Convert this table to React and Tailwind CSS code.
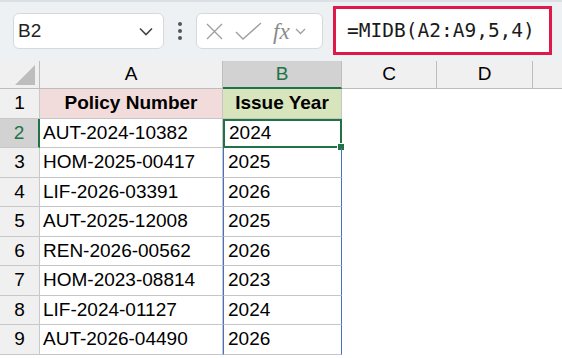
import React from "react";

const rows = [
  ["AUT-2024-10382", "2024"],
  ["HOM-2025-00417", "2025"],
  ["LIF-2026-03391", "2026"],
  ["AUT-2025-12008", "2025"],
  ["REN-2026-00562", "2026"],
  ["HOM-2023-08814", "2023"],
  ["LIF-2024-01127", "2024"],
  ["AUT-2026-04490", "2026"],
];

const Toolbar = () => (
  <div className="h-[61px] bg-[#eef1f4] border-t-[2px] border-[#dcdfe3] flex items-start">
    <div className="ml-[13px] mt-[11px] w-[151px] h-[36px] bg-white border border-[#d6d8dc] rounded-[6px] flex items-center justify-between pl-[4px] pr-[10px]">
      <span className="text-[19px] text-[#222]">B2</span>
      <svg width="14" height="9" viewBox="0 0 14 9" fill="none" stroke="#444" strokeWidth="1.6">
        <path d="M1 1.5 L7 7.5 L13 1.5" />
      </svg>
    </div>
    <div className="w-[32px] mt-[11px] h-[36px] flex flex-col items-center justify-center gap-[3px]">
      <span className="w-[4px] h-[4px] bg-[#555] rounded-full" />
      <span className="w-[4px] h-[4px] bg-[#555] rounded-full" />
      <span className="w-[4px] h-[4px] bg-[#555] rounded-full" />
    </div>
    <div className="mt-[11px] w-[127px] h-[36px] bg-white border border-[#d6d8dc] rounded-[6px] flex items-center pl-[8px] gap-[11px]">
      <svg width="19" height="19" viewBox="0 0 19 19" stroke="#a0a0a0" strokeWidth="1.4" fill="none">
        <path d="M2 2 L17 17 M17 2 L2 17" />
      </svg>
      <svg width="27" height="19" viewBox="0 0 27 19" stroke="#a0a0a0" strokeWidth="1.4" fill="none">
        <path d="M1 10 L8 17 L26 1" />
      </svg>
      <div className="flex items-center gap-[5px]">
        <span className="text-[23px] italic text-[#8a8a8a] leading-none" style={{ fontFamily: '"Liberation Serif", serif' }}>fx</span>
        <svg width="11" height="7" viewBox="0 0 11 7" fill="none" stroke="#a0a0a0" strokeWidth="1.3">
          <path d="M1 1 L5.5 5.5 L10 1" />
        </svg>
      </div>
    </div>
    <div className="ml-[10px] mt-[4px] w-[219px] h-[49px] bg-white border-[3px] border-[#e0194b] flex items-center pl-[11px]">
      <span className="text-[19.5px] text-[#1a1a1a]" style={{ fontFamily: '"DejaVu Sans Mono", monospace' }}>=MIDB(A2:A9,5,4)</span>
    </div>
  </div>
);

export default function App() {
  return (
    <div className="w-[562px] h-[358px] overflow-hidden bg-white" style={{ fontFamily: '"Liberation Sans", Arial, sans-serif' }}>
      <Toolbar />
      <div className="grid grid-cols-[40px_183px_119px_95px_96px_1fr] text-[19px] text-black">
        <div className="h-[28px] bg-[#f0f0f0] border-r border-b border-[#bdbdbd] flex items-end justify-end pr-[4px] pb-[3px]">
          <svg width="20" height="20" viewBox="0 0 20 20">
            <path d="M20 0 L20 20 L0 20 Z" fill="#bdbdbd" />
          </svg>
        </div>
        <div className="h-[28px] bg-[#f0f0f0] border-r border-b border-[#bdbdbd] flex items-center justify-center">A</div>
        <div className="h-[28px] bg-[#d2d2d2] border-r border-b-2 border-b-[#217346] border-r-[#bdbdbd] flex items-center justify-center text-[#217346]">B</div>
        <div className="h-[28px] bg-[#f0f0f0] border-r border-b border-[#bdbdbd] flex items-center justify-center">C</div>
        <div className="h-[28px] bg-[#f0f0f0] border-r border-b border-[#bdbdbd] flex items-center justify-center">D</div>
        <div className="h-[28px] bg-[#f0f0f0] border-b border-[#bdbdbd]" />

        <div className="h-[29.5px] bg-[#f0f0f0] border-r border-b border-[#c8c8c8] flex items-center justify-center">1</div>
        <div className="h-[29.5px] bg-[#f2dcdb] border-r border-b border-[#c6c6c6] flex items-center justify-center font-bold">Policy Number</div>
        <div className="h-[29.5px] bg-[#d8e4bc] border-r border-b border-[#c6c6c6] flex items-center justify-center font-bold">Issue Year</div>
        <div className="h-[29.5px]" />
        <div className="h-[29.5px]" />
        <div className="h-[29.5px]" />

        {rows.map(([a, b], i) => {
          const sel = i === 0;
          return (
            <React.Fragment key={a}>
              <div className={`h-[29.5px] border-b flex items-center justify-center ${sel ? "bg-[#d2d2d2] text-[#217346] border-r-2 border-r-[#217346] border-b-[#c8c8c8]" : "bg-[#f0f0f0] border-r border-[#c8c8c8]"}`}>{i + 2}</div>
              <div className="h-[29.5px] border-r border-b border-[#c6c6c6] flex items-center pl-[3px]">{a}</div>
              <div className={`h-[29.5px] relative flex items-center pl-[4px] ${sel ? "border-2 border-[#217346]" : "border-l border-r border-b border-l-[#4472c4] border-r-[#4472c4] border-b-[#c6c6c6]"} ${i === rows.length - 1 ? "border-b-[#4472c4]" : ""}`}>
                {b}
                {sel && <span className="absolute right-[-5px] bottom-[-5px] w-[8px] h-[8px] bg-[#217346] border border-white" />}
              </div>
              <div className="h-[29.5px]" />
              <div className="h-[29.5px]" />
              <div className="h-[29.5px]" />
            </React.Fragment>
          );
        })}
      </div>
    </div>
  );
}
